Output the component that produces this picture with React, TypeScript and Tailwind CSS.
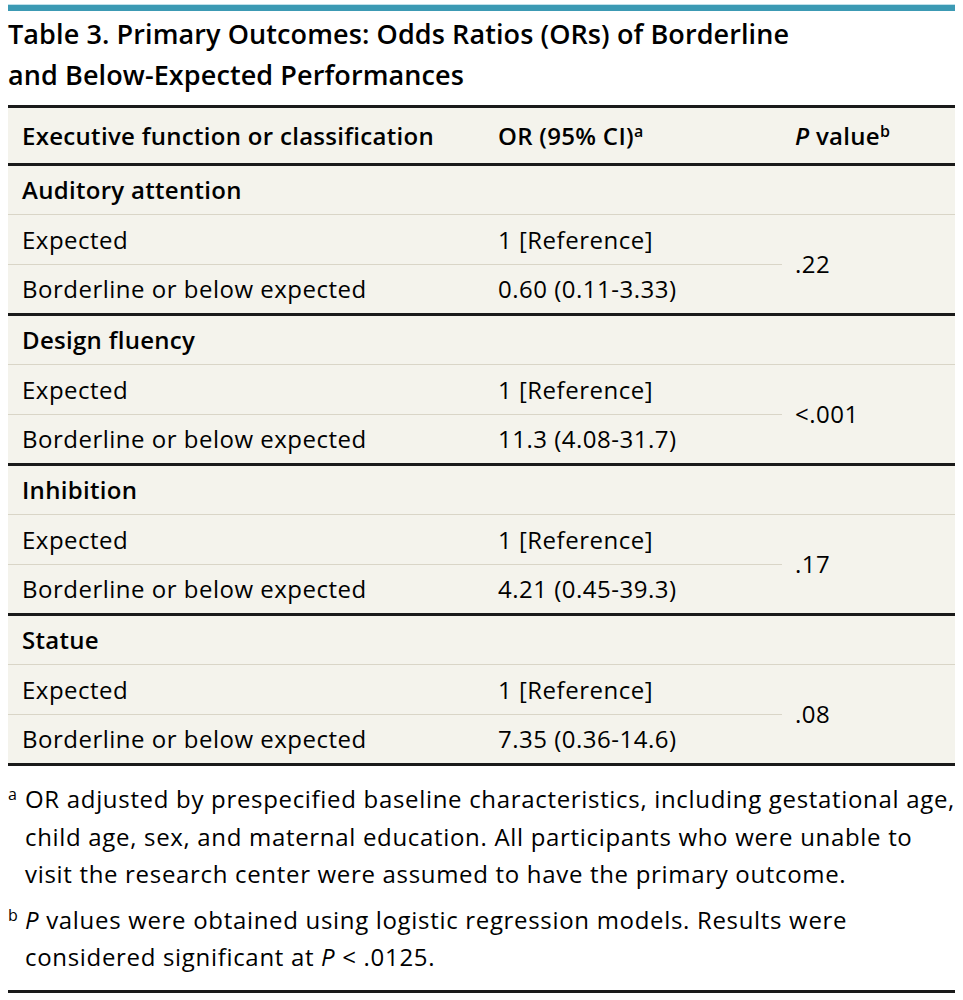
import React from 'react';

const groups = [
  { name: 'Auditory attention', or: '0.60 (0.11-3.33)', p: '.22' },
  { name: 'Design fluency', or: '11.3 (4.08-31.7)', p: '<.001' },
  { name: 'Inhibition', or: '4.21 (0.45-39.3)', p: '.17' },
  { name: 'Statue', or: '7.35 (0.36-14.6)', p: '.08' },
];

export default function App() {
  return (
    <div className="bg-white min-h-[1000px] px-2 pt-1 text-black" style={{ fontFamily: '"Open Sans", "Noto Sans", sans-serif' }}>
      <div className="h-[7px] bg-[#3c9ab4] border-t border-[#bfe0ea]" />

      <h1 className="mt-[2px] text-[27px] leading-[41px] font-semibold tracking-[0.1px]">
        Table 3. Primary Outcomes: Odds Ratios (ORs) of Borderline
        <br />
        and Below-Expected Performances
      </h1>

      <table className="mt-[10px] w-full border-collapse bg-[#f4f3ec] text-[24px] tracking-[0.5px]">
        <thead>
          <tr className="border-t-[3px] border-b-[3px] border-[#1a1a1a] h-[58px]">
            <th className="w-[476px] pl-[14px] text-left font-semibold tracking-[0.3px]">Executive function or classification</th>
            <th className="w-[298px] pl-[14px] text-left font-semibold tracking-[0.3px]">
              OR (95% CI)<sup className="text-[16px] font-semibold">a</sup>
            </th>
            <th className="pl-[13px] text-left font-semibold tracking-[0.3px]">
              <i>P</i> value<sup className="text-[16px] font-semibold">b</sup>
            </th>
          </tr>
        </thead>
        <tbody>
          {groups.map((g) => (
            <React.Fragment key={g.name}>
              <tr className="h-[50px] border-b border-[#d9d5c7]">
                <td colSpan={3} className="pl-[14px] font-semibold tracking-[0.3px]">{g.name}</td>
              </tr>
              <tr className="h-[50px]">
                <td className="pl-[14px] border-b border-[#d9d5c7]">Expected</td>
                <td className="pl-[14px] border-b border-[#d9d5c7]">1 [Reference]</td>
                <td rowSpan={2} className="pl-[13px] border-b-[3px] border-[#1a1a1a]">{g.p}</td>
              </tr>
              <tr className="h-[50px] border-b-[3px] border-[#1a1a1a]">
                <td className="pl-[14px]">Borderline or below expected</td>
                <td className="pl-[14px]">{g.or}</td>
              </tr>
            </React.Fragment>
          ))}
        </tbody>
      </table>

      <div className="pt-[14px] pb-[14px] border-b-[3px] border-[#1a1a1a] text-[24px] leading-[37.5px] tracking-[0.68px] whitespace-nowrap">
        <div className="flex mb-[8px]">
          <span className="w-[17px] shrink-0 text-[16px] leading-[28px] tracking-normal">a</span>
          <p>
            OR adjusted by prespecified baseline characteristics, including gestational age,
            <br />
            child age, sex, and maternal education. All participants who were unable to
            <br />
            visit the research center were assumed to have the primary outcome.
          </p>
        </div>
        <div className="flex">
          <span className="w-[17px] shrink-0 text-[16px] leading-[28px] tracking-normal">b</span>
          <p>
            <i>P</i> values were obtained using logistic regression models. Results were
            <br />
            considered significant at <i>P</i> &lt; .0125.
          </p>
        </div>
      </div>
    </div>
  );
}
